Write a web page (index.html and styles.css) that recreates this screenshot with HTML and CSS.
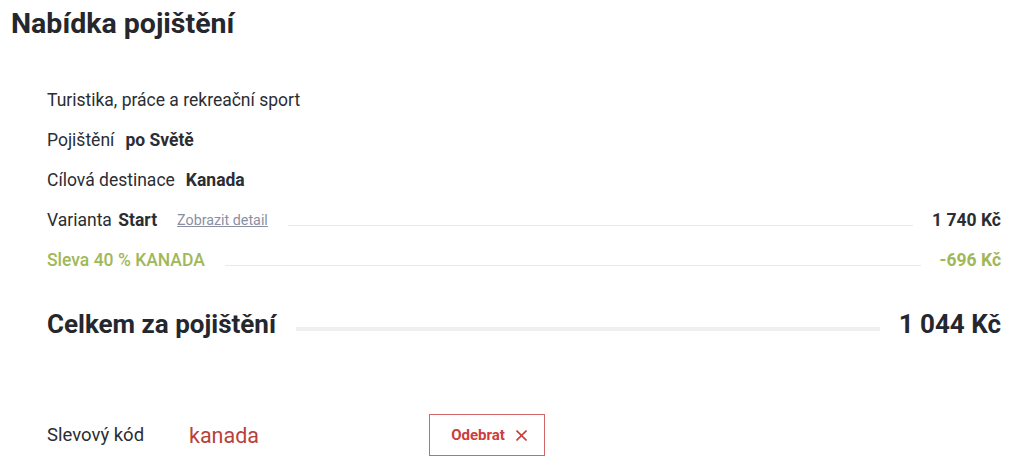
FILE: index.html
```html
<!DOCTYPE html>
<html lang="cs">
<head>
  <meta charset="UTF-8">
  <title>Nabídka pojištění</title>
  <link rel="stylesheet" href="styles.css">
</head>
<body>
  <h1 class="page-title">Nabídka pojištění</h1>

  <div class="offer">
    <div class="row">Turistika, práce a rekreační sport</div>
    <div class="row">Pojištění <strong class="value-gap">po Světě</strong></div>
    <div class="row">Cílová destinace <strong class="value-gap">Kanada</strong></div>

    <div class="row price">
      <span>Varianta <strong>Start</strong></span>
      <a class="detail-link" href="#">Zobrazit detail</a>
      <span class="leader"></span>
      <strong class="amount">1 740 Kč</strong>
    </div>

    <div class="row price discount">
      <span>Sleva 40 % KANADA</span>
      <span class="leader"></span>
      <strong class="amount">-696 Kč</strong>
    </div>

    <div class="row price total">
      <span>Celkem za pojištění</span>
      <span class="leader"></span>
      <span class="amount">1 044 Kč</span>
    </div>

    <div class="promo">
      <span class="promo-label">Slevový kód</span>
      <span class="promo-code">kanada</span>
      <button class="remove-btn">
        Odebrat
        <svg class="cross" width="11" height="11" viewBox="0 0 11 11">
          <path d="M0.5 0.5 L10.5 10.5 M10.5 0.5 L0.5 10.5" stroke="currentColor" stroke-width="1.6" fill="none"/>
        </svg>
      </button>
    </div>
  </div>
</body>
</html>
```

FILE: styles.css
```css
body {
  margin: 0;
  padding: 0;
  background: #fff;
  color: #2b2d33;
  font-family: Roboto, sans-serif;
}

.page-title {
  margin: 0;
  padding: 6px 0 0 11px;
  font-size: 28.5px;
  font-weight: 700;
  color: #25272e;
  line-height: 36px;
}

.offer {
  padding: 38px 23px 0 47px;
}

.row {
  display: flex;
  align-items: center;
  height: 40px;
  font-size: 17.5px;
}

.row strong {
  font-weight: 700;
  margin-left: 2px;
}

.row strong.value-gap {
  margin-left: 11px;
}

.detail-link {
  margin-left: 20px;
  font-size: 14.3px;
  color: #8a8fa3;
  text-decoration: underline;
}

.leader {
  flex: 1;
  height: 1px;
  background: #e8e9ec;
  margin: 11px 19px 0 20px;
}

.row strong.amount {
  margin-left: 0;
}

.discount {
  color: #a0b85a;
  font-weight: 500;
}

.discount strong {
  color: #a0b85a;
}

.total {
  height: 56px;
  margin-top: 16px;
  font-size: 26px;
  font-weight: 700;
  color: #25272e;
}

.total .leader {
  height: 4px;
  background: #eeeff1;
  margin-top: 10px;
}

.promo {
  display: flex;
  align-items: center;
  margin-top: 62px;
}

.promo-label {
  width: 142px;
  font-size: 18.5px;
}

.promo-code {
  width: 240px;
  font-size: 21.5px;
  color: #b8413a;
}

.remove-btn {
  display: flex;
  align-items: center;
  justify-content: center;
  gap: 11px;
  width: 116px;
  height: 42px;
  padding: 0 0 0 4px;
  border: 1px solid #d06868;
  background: #fff;
  color: #cc3d3d;
  font-family: Roboto, sans-serif;
  font-size: 15px;
  font-weight: 700;
  cursor: pointer;
}

.cross {
  display: block;
}
```
